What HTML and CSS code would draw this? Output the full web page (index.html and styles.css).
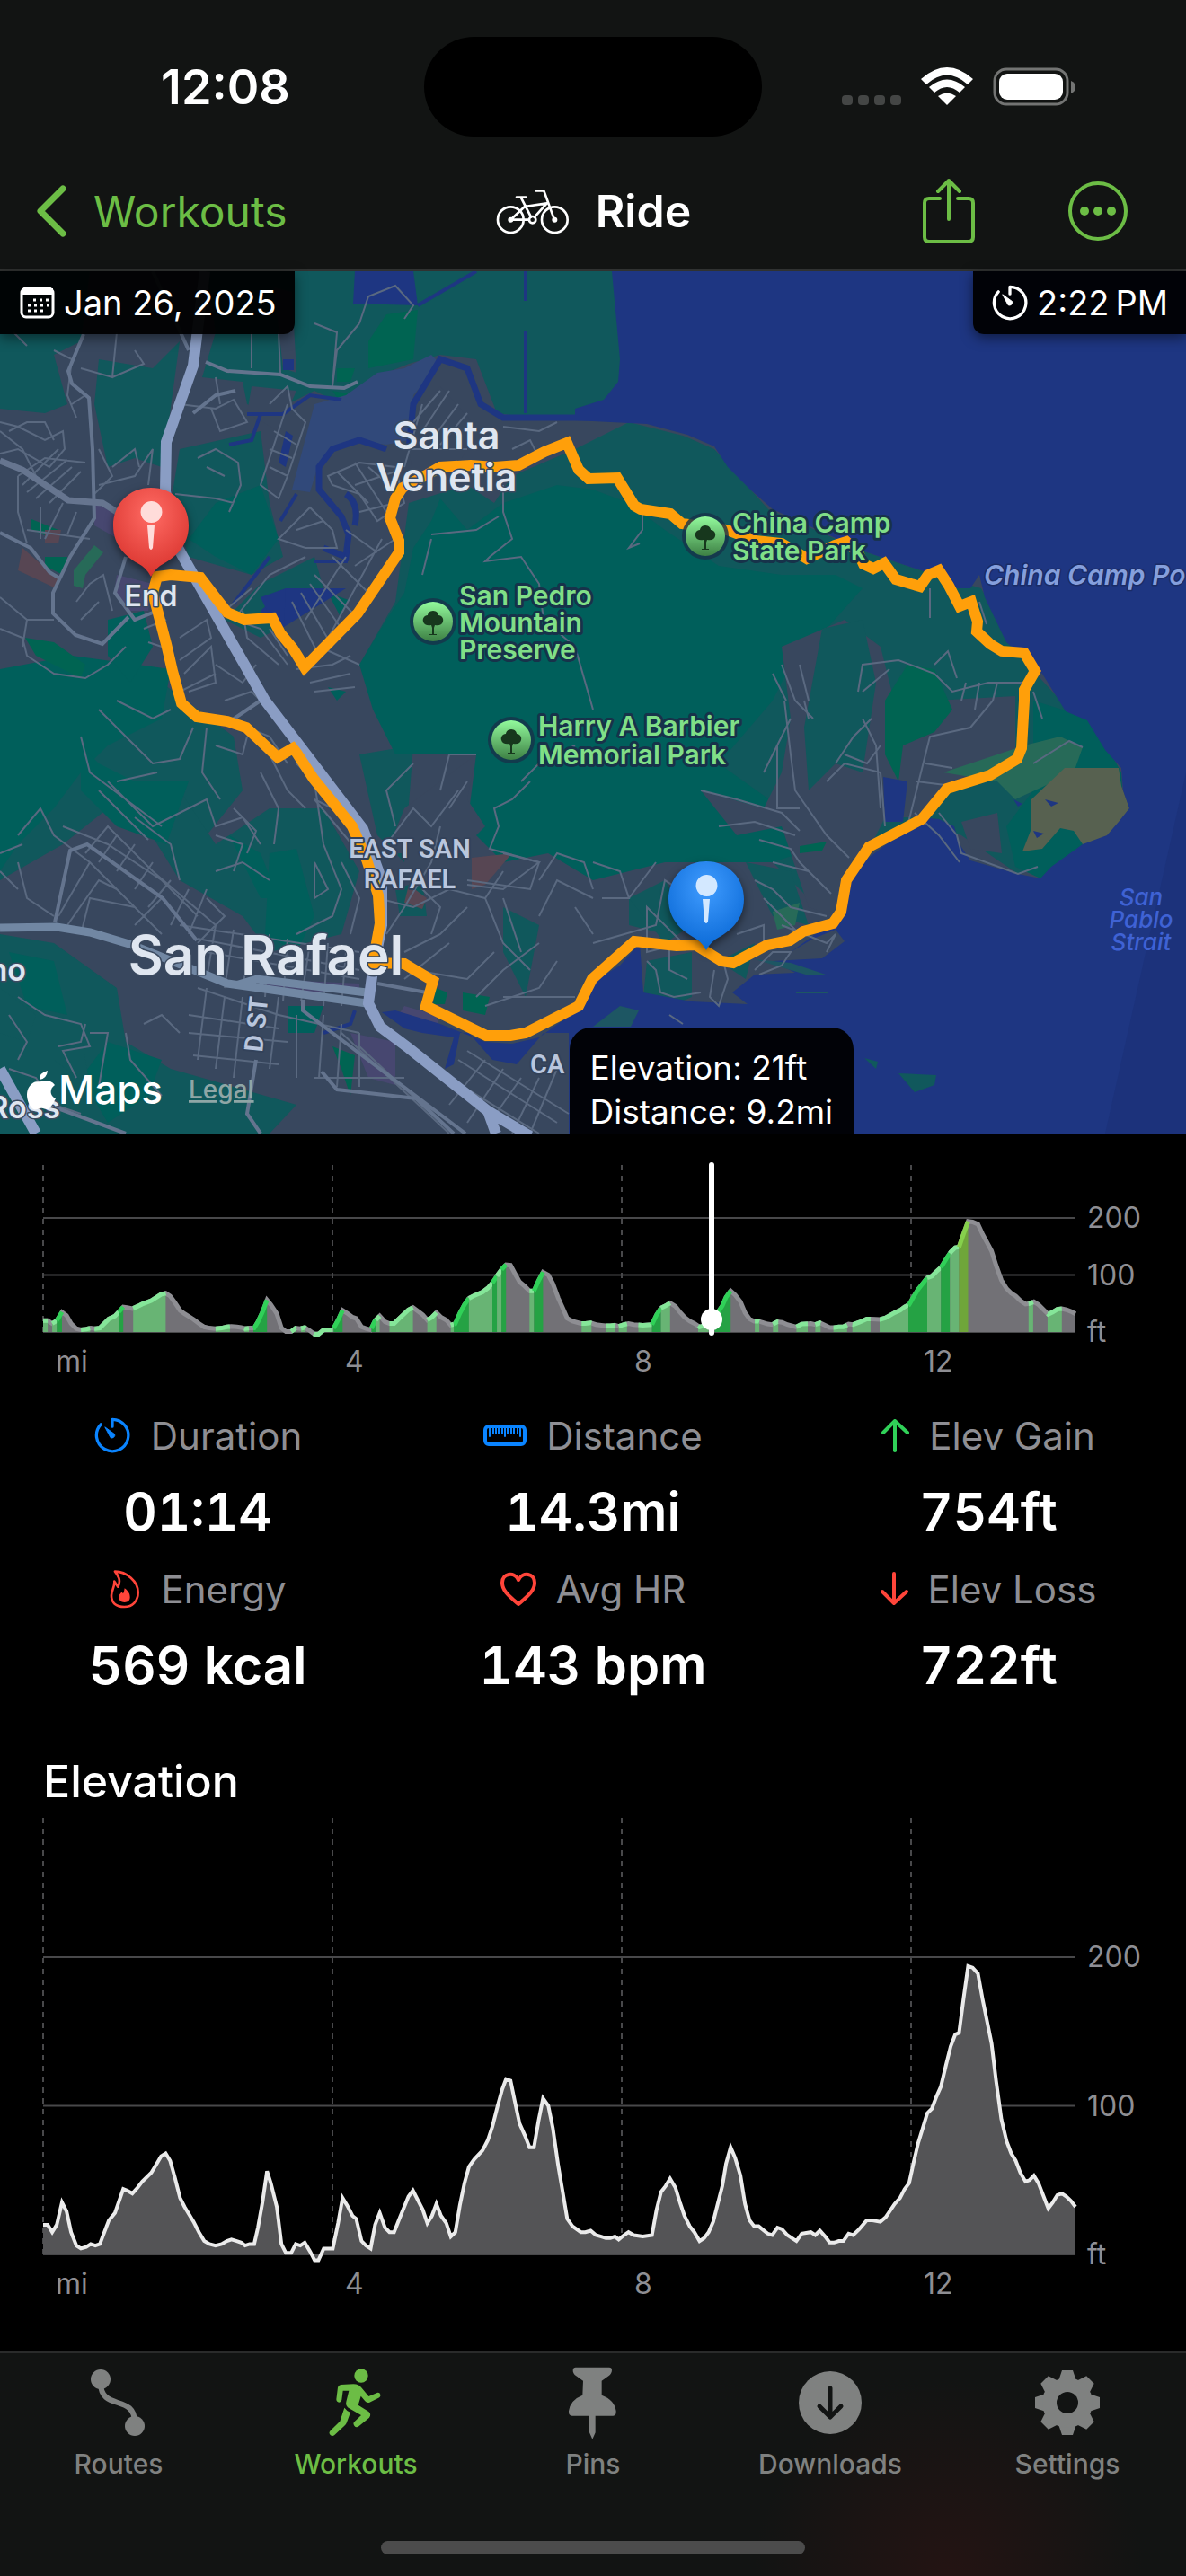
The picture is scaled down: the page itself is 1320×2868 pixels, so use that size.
FILE: index.html
```html
<!DOCTYPE html>
<html lang="en">
<head>
    <meta charset="UTF-8">
    <meta name="viewport" content="width=device-width, initial-scale=1.0">
    <title>Ride</title>
    <link rel="stylesheet" href="styles.css">
</head>
<body>
    <svg class="defs" width="0" height="0" aria-hidden="true">
        <symbol id="timer" viewBox="40 24 128 128">
            <path d="M104 58V34A54 54 0 1 1 65 51" fill="none" stroke="currentColor" stroke-width="10" stroke-linecap="round" stroke-linejoin="round"/>
            <path d="M79 60L112 84A10 10 0 0 1 98 96Z" fill="currentColor" stroke="currentColor" stroke-width="3" stroke-linejoin="round"/>
        </symbol>
        <symbol id="tree" viewBox="0 0 60 60">
            <circle cx="30" cy="30" r="26" fill="#17324a" opacity=".8"/>
            <circle cx="30" cy="30" r="22" fill="url(#park)"/>
            <path d="M30 18c4 0 6 3 6 5 4 0 6 4 5 7-1 4-5 5-9 4l-1 3v7h3v1h-8v-1h3v-7l-1-3c-4 1-8 0-9-4-1-3 1-7 5-7 0-2 2-5 6-5z" fill="#17371d"/>
        </symbol>
        <linearGradient id="park" x1="0" y1="0" x2="0" y2="1">
            <stop offset="0" stop-color="#92fa9c"/>
            <stop offset="1" stop-color="#3d8044"/>
        </linearGradient>
        <radialGradient id="red" cx=".5" cy=".3" r=".7">
            <stop offset="0" stop-color="#ff6b64"/>
            <stop offset="1" stop-color="#d9332d"/>
        </radialGradient>
        <radialGradient id="blue" cx=".5" cy=".3" r=".7">
            <stop offset="0" stop-color="#409cff"/>
            <stop offset="1" stop-color="#0a69d6"/>
        </radialGradient>
    </svg>

    <header class="header">
        <div class="status">
            <div class="clock">12:08</div>
            <div class="island"></div>
            <div class="signals">
                <svg width="66" height="43" viewBox="0 0 66 43" fill="#444645">
                    <rect x="0" y="31" width="12" height="11" rx="4"/>
                    <rect x="18" y="31" width="12" height="11" rx="4"/>
                    <rect x="36" y="31" width="12" height="11" rx="4"/>
                    <rect x="54" y="31" width="12" height="11" rx="4"/>
                </svg>
                <svg width="58" height="43" viewBox="0 0 58 43" fill="#fff">
                    <path d="M0 13Q29-13 58 13L52 19Q29-2 6 19Z"/>
                    <path d="M9 22Q29 5 49 22L43 28Q29 16 15 28Z"/>
                    <path d="M19 32Q29 25 39 32L29 42Z"/>
                </svg>
                <svg width="94" height="43" viewBox="0 0 94 43">
                    <rect x="2" y="2" width="81" height="39" rx="13" fill="none" stroke="#737473" stroke-width="3"/>
                    <rect x="7" y="7" width="71" height="29" rx="9" fill="#fff"/>
                    <path d="M87 15q5 2 5 7t-5 7z" fill="#737473"/>
                </svg>
            </div>
        </div>
        <nav class="nav">
            <a class="back" href="#workouts">
                <svg width="34" height="58" viewBox="0 0 34 58" fill="none" stroke="currentColor" stroke-width="7" stroke-linecap="round" stroke-linejoin="round"><path d="M30 4L5 29L30 54"/></svg>
                Workouts
            </a>
            <h1 class="title">
                <svg width="84" height="52" viewBox="40 60 250 156" fill="none" stroke="#fff" stroke-width="8" stroke-linecap="round" stroke-linejoin="round">
                    <circle cx="91" cy="167" r="43"/>
                    <circle cx="238" cy="167" r="43"/>
                    <circle cx="164" cy="167" r="11"/>
                    <path d="M175 70h27L237 167M111 92h31M125 92L159 158M91 167h61M91 167L138 123L212 112L171 158"/>
                    <circle cx="91" cy="167" r="5" fill="#fff"/>
                    <circle cx="238" cy="167" r="5" fill="#fff"/>
                </svg>
                Ride
            </h1>
            <div class="actions">
                <button type="button" aria-label="Share">
                    <svg width="60" height="74" viewBox="0 0 60 74" fill="none" stroke="currentColor" stroke-width="4" stroke-linecap="round" stroke-linejoin="round"><path d="M20 23H8q-5 0-5 5v38q0 5 5 5h44q5 0 5-5V28q0-5-5-5H40M30 46V3M18 15L30 3L42 15"/></svg>
                </button>
                <button type="button" aria-label="More">
                    <svg width="68" height="68" viewBox="0 0 68 68"><circle cx="34" cy="34" r="31" fill="none" stroke="currentColor" stroke-width="4"/><g fill="currentColor"><circle cx="19" cy="34" r="5"/><circle cx="34" cy="34" r="5"/><circle cx="49" cy="34" r="5"/></g></svg>
                </button>
            </div>
        </nav>
    </header>

    <main>
        <section class="map">
            <svg class="map-canvas" viewBox="0 302 1320 960" role="img" aria-label="Ride route around China Camp">
                <rect x="0" y="302" width="1320" height="960" fill="#38475e"/>

                <!-- hills and parks -->
                <g fill="#10585c">
                    <path d="M230 302H690L690 440L660 462L590 465L553 460L530 400L490 395L455 405L430 415L400 440L370 445L350 435L330 445L300 460L275 450L270 425L225 420L240 370Z"/>
                    <path d="M0 302H100L90 380L60 395L75 450L50 460L0 455Z"/>
                    <path d="M110 400L170 410L200 380L185 490L180 520L150 510L120 520L105 450Z"/>
                    <path d="M200 500L290 480L300 560L315 620L280 640L210 620L190 560Z"/>
                    <path d="M250 690L290 650L350 620L360 655L310 700L290 710Z"/>
                    <path d="M455 560L520 540L550 560L570 530L640 500L700 470L760 485L795 500L855 567L930 600L965 615L1040 640L1092 655L1130 725L1185 785L1230 835L1250 890L1200 950L1133 973L1070 930L1020 912L970 945L935 1000L900 1000L860 960L800 940L650 960L590 880L545 850L430 790L400 740L440 670Z"/>
                    <path d="M0 760L100 750L180 760L260 820L270 880L230 930L170 930L120 900L70 940L0 980Z"/>
                    <path d="M150 900L200 880L240 940L300 900L360 900L400 970L380 1040L300 1060L270 1020L200 980Z"/>
                    <path d="M0 1040L60 1050L130 1100L140 1160L190 1190L330 1230L300 1262H0Z"/>
                    <path d="M560 1010L600 1030L585 1110L560 1060ZM400 840L460 830L450 960L420 930Z"/>
                    <path d="M700 1000L750 1010L740 1040L700 1030ZM720 1070L770 1060L770 1110L740 1123L716 1110ZM800 1070L840 1050L830 1090Z"/>
                </g>
                <g fill="#005f5b">
                    <path d="M490 555L520 590L560 560L620 540L660 545L700 560L740 590L800 630L870 640L930 640L960 655L920 700L890 720L860 780L800 850L870 900L890 950L860 960L770 960L740 960L660 980L610 950L560 960L520 920L530 840L440 840L415 790L400 740L430 690L450 660L460 610L480 580Z"/>
                    <path d="M0 745L80 730L190 745L180 800L120 830L90 860L60 900L20 940L0 970Z"/>
                    <path d="M240 560L290 540L310 600L280 640L240 620L210 600Z"/>
                    <path d="M90 830L110 850L150 870L210 870L185 940L130 920L90 880ZM300 950L330 945L350 1020L330 1060L295 1040ZM255 930L290 950L310 1000L290 1000Z"/>
                    <path d="M10 1060L60 1070L75 1130L30 1120ZM120 1160L180 1180L165 1220L120 1250L90 1200ZM320 1120L360 1120L350 1150L320 1150Z"/>
                    <path d="M120 690L160 680L170 720L145 760L120 730ZM365 765L385 770L375 780ZM365 660L388 668L378 685Z"/>
                    <path d="M1150 780L1215 800L1248 860L1250 895L1200 950L1158 978L1130 965L1120 920L1150 880ZM980 780L1090 780L1030 820L990 870L975 830Z"/>
                </g>
                <g fill="#38475e">
                    <path d="M870 720L940 690L980 720L1000 800L1040 780L1130 775L1130 850L1050 880L1020 910L985 910L960 960L930 1020L900 1010L870 920L820 930L780 880L850 900L870 860L880 800Z"/>
                    <path d="M490 870L530 840L520 890L540 920L510 950L430 950L450 900ZM1070 915L1110 905L1115 950L1080 945Z"/>
                    <path d="M280 430L330 435L310 480L275 460ZM450 470L490 430L530 475L510 520L460 530ZM305 320L325 325L330 415L315 410Z"/>
                </g>
                <g fill="#10585c">
                    <path d="M915 700L960 690L975 760L960 860L930 850L900 880L895 810ZM700 1000L740 980L770 1030L740 1050ZM830 960L880 970L900 1030L860 1020Z"/>
                    <path d="M0 1100L40 1130L30 1160L0 1150ZM60 1180L90 1150L100 1210ZM440 990L470 980L475 1020L445 1020Z"/>
                </g>
                <g fill="#006452">
                    <path d="M410 380L430 350L465 345L460 400L410 410ZM375 410L395 410L390 425H375ZM370 435L395 440L380 450Z"/>
                    <path d="M985 780L1010 740L1040 745L1060 790L1040 815L1005 830L1000 870L985 840ZM28 710L60 715L95 740L90 755L40 730ZM35 578L65 590L60 600L35 590ZM50 620L75 620L70 640L50 630Z"/>
                    <path d="M370 1165L395 1175L390 1220L380 1190ZM485 1100L498 1105L495 1118H482ZM515 1105L545 1110L540 1130L515 1125ZM890 942L920 937L915 947L890 950Z"/>
                </g>
                <path d="M1050 860L1140 830L1180 820L1205 832L1195 860L1130 890L1110 870ZM82 635L105 607L115 615L95 640L92 655L82 652ZM860 1015L890 1005L885 1030L865 1035Z" fill="#276a58"/>
                <path d="M1148 890L1185 855L1245 855L1248 875L1257 900L1230 935L1205 940L1195 925L1180 922L1160 945L1138 948L1147 925Z" fill="#576150"/>
                <path d="M105 560L130 572L128 598L105 585ZM130 640L170 650L165 680L140 680L127 660ZM290 1090L400 1095L400 1105L290 1105ZM450 1120L485 1130L490 1145L440 1135ZM390 1150L440 1160L440 1208L410 1200Z" fill="#474770"/>
                <path d="M25 610L65 645L62 655L20 635ZM455 985L475 1000L470 1012L450 1005ZM525 955L570 950L540 985L525 990ZM50 590L68 590L65 605H50Z" fill="#574653"/>

                <!-- water -->
                <path d="M385 440L420 415L450 410L480 395L490 405L460 440L455 490L430 495L390 490L355 515L345 548L325 545L350 450Z" fill="#31497a"/>
                <g fill="#1e3682">
                    <path d="M681 302H1320V1262H633V1150H605L575 1185L548 1180L522 1150L512 1150L505 1185L495 1190L505 1155L470 1150L450 1145L425 1127L440 1125L490 1140L540 1160L570 1162L600 1155L635 1130L665 1090L690 1075L712 1050L716 1105L770 1115L832 1118L815 1105L840 1085L885 1083L860 1070L915 1067L940 1048L930 1035L905 1045L880 1060L935 1020L945 985L960 960L1000 930L1025 910L1045 912L1062 920L1068 940L1080 958L1133 973L1158 978L1170 965L1205 940L1232 930L1245 915L1257 900L1250 880L1248 855L1230 835L1210 802L1186 792L1160 750L1120 715L1096 665L1090 640L1080 655H1065L1040 640L965 615L860 567L835 545L810 520L795 497L765 484L720 472L640 468L640 455L672 445L688 425L690 400Z"/>
                    <path d="M395 302H460L465 340L393 338ZM385 655H318L290 680L304 698H316ZM983 865L1010 870L1005 915H985ZM315 400h12v12h-12zM318 480L326 485L318 520L310 515Z"/>
                    <path d="M290 665L318 655L316 698L305 696ZM1128 890l10 5-5 3zM1163 890l15 4-8 4zM1150 925l12 3-8 5z"/>
                </g>
                <path d="M455 500L460 450L490 400L520 410L535 450L560 465H660M360 610L385 620L388 595L380 575L355 545L355 520L370 500L400 490L430 500M385 550Q400 560 395 585M0 1195L40 1262" fill="none" stroke="#1e3682" stroke-width="7"/>
                <path d="M465 340L530 302M585 302V335M585 368V460M275 461H315L345 440L380 445M290 461L280 490L255 495M330 550L312 580M388 600L385 625L350 625M300 620L260 672M395 1125L390 1140L360 1150" fill="none" stroke="#1e3682" stroke-width="4"/>
                <path d="M962 1178l15 4-2 8zM1000 1195L1042 1197L1040 1208L1018 1216Z" fill="#10585c"/>
                <path d="M1320 860L1230 1262H1320Z" fill="#1a2c70" opacity=".4"/>
                <path d="M690 1120L711 1125L702 1143H660ZM840 1068L880 1072L922 1086H900ZM886 1104h36v2h-36z" fill="#1d5663"/>

                <!-- side streets -->
                <g class="streets">
                    <path d="M15 370L30 385M60 390L80 400L75 440L85 465M130 370L125 420L90 410M125 420L160 405L150 390M95 440L80 450M0 470L20 475L50 490L70 480L72 500L55 520L20 500L0 505M20 530L50 510L95 515M25 540L65 500M30 548L75 512M40 555L80 520M55 560L90 525M20 530L20 570L30 605M45 565L45 600M30 590L100 600M50 600L70 560M75 595L85 570M110 500L125 530L105 550M125 520L150 500L155 520M110 540L150 530L170 500L165 540M10 480L30 470L50 470L60 490M0 480L25 500L40 530"/>
                    <path d="M280 370L280 410M310 370L312 415M350 360L375 370L370 430M400 360L375 390L370 430M400 360L410 330L440 318L460 340L450 355M200 450L240 455L260 445L275 470L245 480L235 455M240 420L245 450M300 450L320 430L325 455L340 470L320 530L310 555L290 540L310 480L320 450M300 500L325 510M305 480L330 495M300 520L320 530M220 510L240 500L265 515L268 540L255 570M195 550L240 555L260 560M230 520L250 530"/>
                    <path d="M365 530L400 515L440 520L450 560L420 580L400 550L370 540ZM375 525L410 560M395 515L430 570M410 520L445 550M395 540L440 525M400 570L440 560M385 590L420 615M395 630L440 600M370 620L410 660M350 640L400 690M345 650L380 700M335 660L370 720M325 670L355 730M340 690L385 620M360 720L425 600M320 590L345 565L370 590L375 610L340 610L310 600ZM330 590L360 580M250 680L280 655M260 690L300 640L340 620M270 680L275 710L310 740M300 700L320 730"/>
                    <path d="M460 470L490 435M470 480L500 435M480 490L510 450M490 495L520 460M450 520L470 450M455 500L520 500M560 475L600 480L620 470M570 500L590 490L600 510L575 515M560 540L560 570L570 600L545 620L540 625L580 620L600 650L605 690L640 720L660 790M480 595L530 590L555 575M470 640L480 600"/>
                    <path d="M60 690L30 690L0 665M0 700L25 710L30 730L60 750L95 755L120 740L140 720M30 690L25 720M85 670L100 650L115 640L125 680M90 690L110 670M160 700L185 690M165 715L180 720M200 710L230 690L235 710L200 735M205 750L235 720L240 760L210 770M200 770L240 750M240 740L270 760L285 740M250 780L280 770L300 790M260 690L290 700L320 740M330 745L370 740L390 730M345 760L390 750M350 770L395 765M355 720L400 740"/>
                    <path d="M110 790L140 820L170 850L200 845L215 810M130 780L170 800L190 790M230 810L225 860L245 890M240 830L270 840L275 820M250 800L300 820L320 850M90 820L100 860L180 920M110 880L165 935M120 870L170 920L190 910M130 870L175 860M190 910L230 890L240 920L270 910L290 940M240 930L270 940L260 970M150 910L190 940L200 980M260 900L285 925L275 950M290 860L310 900L305 940M300 840L320 880L340 900M330 850L360 880L370 900L350 890L400 950M350 870L360 940L380 990L370 1020L330 1040"/>
                    <path d="M20 930L45 900L60 930L100 960L140 1000L180 1040M20 960L30 1000L60 1020M0 950L25 940M0 970L20 990M70 920L120 940L180 980L220 1020M95 950L120 920L170 970L240 1030M130 930L110 960M150 940L130 970M170 960L150 990M190 980L165 1010M210 990L190 1030M230 990L210 1040M65 1020L100 960M75 1030L110 980L130 990M90 1040L100 1000L150 1010M180 1000L150 1030M240 970L270 960L300 980M230 1000L250 1020L220 1050M350 960L365 990L350 1000ZM380 960L400 1000L390 1040"/>
                    <path d="M200 1030L400 1060M220 1045L400 1080M230 1060L400 1090M240 1030L230 1090M260 1035L250 1100M280 1040L270 1100M300 1040L295 1110M320 1045L315 1115M345 1050L335 1115M365 1050L360 1120M385 1060L380 1120M220 1100L310 1130L400 1150M210 1130L310 1145M210 1150L320 1160M215 1175L310 1185M230 1100L220 1180M250 1110L240 1190M270 1110L260 1200M310 1110L300 1190M330 1130L330 1200M360 1130L355 1200M380 1140L375 1210M400 1150L400 1210M350 1200L450 1200M400 1165L480 1240M380 1150L500 1262"/>
                    <path d="M20 1110L50 1130L90 1140L100 1165L70 1170L85 1200M10 1130L30 1160L20 1180M65 1165L90 1160L95 1140M100 1150L120 1150L115 1180L110 1210M140 1150L145 1180L180 1220M160 1140L180 1130L200 1150M10 1190L40 1200L60 1230L90 1240"/>
                    <path d="M420 1000L460 1010L500 990L540 1000L560 970M430 1040L450 1010L480 960L490 920M450 1060L490 1040L520 1010M450 1090L500 1050M460 1080L520 1090L550 1060M470 990L490 1010L480 1040M430 940L460 900L480 920L510 880M440 920L430 880L460 850M490 880L500 840L530 840M500 900L520 870M520 980L590 990L600 960L560 950M540 1000L560 1050L590 1080M560 1000L580 1060M600 1020L620 980L660 1000M640 1010L660 1040M600 980L620 950L650 960L660 990M530 1110L560 1080L600 1050M540 1120L600 1100L620 1070M560 1110L640 1110"/>
                    <path d="M590 870L570 890L550 900L555 920L545 945L600 960L560 990L520 985M500 1200L600 1262M510 1180L620 1250M520 1170L633 1240M540 1180L500 1230M560 1190L520 1250M580 1200L545 1250M600 1200L570 1262M620 1190L590 1262M455 1170L530 1220"/>
                    <path d="M660 1050L730 1030L740 980L770 1000L780 1040M700 1000L730 960M720 1010L760 1050L720 1060ZM720 1070L730 1080L735 1105L750 1110L780 1105M745 1055L745 1080L765 1090M795 1080L790 1110L800 1120L810 1090L805 1070M840 1080L860 1060L880 1060L870 1075L845 1085M820 1040L850 1030L850 1050M840 980L860 990L880 1010L920 1020M850 1000L890 1040M870 1030L920 1050L930 1040L920 1060M845 935L880 945L890 960L925 995M860 960L900 970M660 960L690 970L700 1000L670 1000"/>
                    <path d="M873 780L880 840L885 880L920 930L945 955M865 830L865 900L890 900M850 860L870 820L880 800M870 740L885 780L905 800M780 880L820 890L870 905L890 925M800 920L840 915L885 930M920 870L940 850L980 860L985 920M930 850L950 820L970 800M940 840L965 850L980 830M960 800L975 830L980 900M900 800L895 780M1010 920L1020 880L1035 820L1080 810L1105 780L1110 760M1020 870L1060 875M1030 850L1060 855M1018 905L1045 930L1068 960"/>
                    <path d="M955 770L960 740L1000 735L1040 750L1060 770L1100 760L1140 760M960 770L990 745M1040 740L1055 725L1065 755M1070 780L1075 760M1085 790L1090 760M1150 770L1160 800M1150 850L1190 825L1205 832M715 570L715 590L700 610L712 605M1035 655V688M1090 670L1098 695M890 740L900 780M860 750L875 780M1045 905L1065 930L1070 950L1133 973L1155 965M640 830L600 850L580 870M745 1130L760 1140"/>
                </g>

                <!-- main roads -->
                <g class="roads">
                    <path d="M93 372L76 413L80 427L99 443L103 500L105 577L78 620L59 660V683L84 707L114 717L143 687M0 593L34 610L55 637L65 643M229 403L253 413L312 417L345 430L383 432L398 425M215 460L240 440L262 435M140 620L128 660L150 690L175 680M61 1027L78 947L97 940L181 1000L219 1047M358 1193L375 1213L463 1223L505 1262M285 1180L275 1240L290 1262M337 1113V1125L518 1262M40 1225L140 1262M420 1095L475 1105M170 302L210 390M253 805L290 780"/>
                </g>
                <path d="M0 513L25 523L76 557L114 560L130 570" fill="none" stroke="#66758f" stroke-width="7"/>
                <path d="M0 1033L63 1032L100 1038L147 1052L253 1095L408 1117M262 1097L286 1090L408 1105" fill="none" stroke="#7187a3" stroke-width="9"/>
                <path class="freeway" d="M228 302L215 407L185 492L184 547L198 610L295 780L404 923L425 980V1030L415 1080L410 1117L423 1143L455 1167L543 1237L590 1265M543 1237L552 1262M0 1190L40 1262"/>

                <!-- ride -->
                <path class="ride" d="M175 642L190 640L223 643L242 668L253 682L272 690L303 688L312 705L326 722L339 743L398 683L444 615V602L434 577L440 555L448 543L476 528L490 520L524 518L551 520L577 518L606 503L631 493L644 523L655 533L687 532L706 563L713 567L746 572L759 583L809 590L841 602L870 605L898 622L929 607L942 603L955 615L961 628L972 633L984 627L997 645L1024 653L1033 640L1045 635L1056 652L1068 675L1081 670L1085 683L1088 692L1087 703L1102 717L1115 725L1140 727L1152 747L1140 768V780L1137 833L1132 845L1102 863L1054 878L1026 912L967 943L942 980L936 1015L927 1028L894 1037L879 1047L854 1052L816 1072L803 1070L774 1052L753 1053L706 1048L659 1090L644 1120L585 1150L568 1153H541L474 1120L482 1092L450 1073L415 1072L423 1028L421 997L408 957L392 920L349 867L330 838L326 833L309 843L274 810L253 803L219 798L202 783L192 747L185 717L170 660Z"/>

                <!-- labels -->
                <g class="town">
                    <text x="497" y="500" font-size="43" text-anchor="middle">Santa</text>
                    <text x="497" y="547" font-size="43" text-anchor="middle">Venetia</text>
                    <text x="296" y="1085" font-size="60" text-anchor="middle">San Rafael</text>
                    <text x="29" y="1092" font-size="34" text-anchor="end">mo</text>
                    <text x="67" y="1245" font-size="34" text-anchor="end">Ross</text>
                    <text x="168" y="675" font-size="32" text-anchor="middle">End</text>
                </g>
                <g class="district">
                    <text x="456" y="955" text-anchor="middle">EAST SAN</text>
                    <text x="456" y="989" text-anchor="middle">RAFAEL</text>
                    <text x="590" y="1195">CA</text>
                    <text x="292" y="1172" transform="rotate(-84 292 1172)">D ST</text>
                </g>
                <g class="park">
                    <use href="#tree" x="452" y="662" width="60" height="60"/>
                    <text x="511" y="674">San Pedro</text>
                    <text x="511" y="704">Mountain</text>
                    <text x="511" y="734">Preserve</text>
                    <use href="#tree" x="755" y="567" width="60" height="60"/>
                    <text x="815" y="593">China Camp</text>
                    <text x="815" y="624">State Park</text>
                    <use href="#tree" x="539" y="794" width="60" height="60"/>
                    <text x="599" y="819">Harry A Barbier</text>
                    <text x="599" y="851">Memorial Park</text>
                </g>
                <text class="point" x="1095" y="651">China Camp Po</text>
                <g class="strait">
                    <text x="1270" y="1008">San</text>
                    <text x="1270" y="1033">Pablo</text>
                    <text x="1270" y="1058">Strait</text>
                </g>

                <!-- start and end pins -->
                <g class="pin">
                    <path d="M168 543C193 543 210 562 210 585C210 608 195 620 183 627Q173 632 168 642Q163 632 153 627C141 620 126 608 126 585C126 562 143 543 168 543Z" fill="url(#red)"/>
                    <path d="M164 585h8l-2 25q-2 4-4 0zM168 558a12 12 0 1 0 1 0z" fill="#ffdcda"/>
                    <path d="M786 959C811 959 828 978 828 1001C828 1024 813 1036 801 1043Q791 1048 786 1058Q781 1048 771 1043C759 1036 744 1024 744 1001C744 978 761 959 786 959Z" fill="url(#blue)"/>
                    <path d="M782 1001h8l-2 25q-2 4-4 0zM786 974a12 12 0 1 0 1 0z" fill="#d3e8ff"/>
                </g>

                <path d="M53 1192q-1 9-9 10q0-8 9-10zM46 1204c4 0 7-2 10 0q3 1 5 4c-6 4-6 12 1 15q-3 7-7 11c-4 3-6-1-10 0-5 1-7 3-10-1-5-6-8-19 0-26 4-4 8-2 11-3z" fill="#fff"/>
                <text class="maps" x="65" y="1229">Maps</text>
                <a href="#legal"><text class="legal" x="210" y="1223">Legal</text></a>
            </svg>
            <div class="badge date">
                <svg width="40" height="36" viewBox="0 0 40 36">
                    <rect x="2" y="2" width="35" height="32" rx="5" fill="none" stroke="#fff" stroke-width="3"/>
                    <path d="M2 2h35v7H2z" fill="#fff"/>
                    <path d="M15 15h17M9 21h23M9 27h17" stroke="#fff" stroke-width="3" stroke-dasharray="3 4"/>
                </svg>
                Jan 26, 2025
            </div>
            <div class="badge time">
                <svg width="42" height="42"><use href="#timer"/></svg>
                2:22&#8201;PM
            </div>
            <div class="callout">
                <div>Elevation: 21ft</div>
                <div>Distance: 9.2mi</div>
            </div>
        </section>

        <svg class="chart" id="gradeChart" viewBox="0 0 1320 294" role="img" aria-label="Elevation by grade"></svg>

        <dl class="stats">
            <div>
                <dt><svg class="c-blue" width="42" height="42"><use href="#timer"/></svg>Duration</dt>
                <dd>01:14</dd>
            </div>
            <div>
                <dt><svg class="c-blue" width="48" height="24" viewBox="0 0 48 24" fill="none" stroke="currentColor"><rect x="2" y="2" width="44" height="20" rx="4" stroke-width="4"/><path d="M7 3V13M24 3V13M41 3V13M11 3v7M14 3v7M17 3v7M21 3v7M27 3v7M31 3v7M34 3v7M38 3v7" stroke-width="2"/></svg>Distance</dt>
                <dd>14.3mi</dd>
            </div>
            <div>
                <dt><svg class="c-green" width="31" height="38" viewBox="0 0 31 38"><path d="M15 36V3M2 16L15 3L29 16"/></svg>Elev Gain</dt>
                <dd>754ft</dd>
            </div>
            <div>
                <dt><svg class="c-red" width="36" height="44" viewBox="100 533 108 132"><path d="M121 541C160 541 198 574 198 610C198 640 180 659 152 659C124 659 109 645 109 621C109 604 120 594 119 574L131 592C142 570 132 555 121 541Z" fill="none" stroke="currentColor" stroke-width="8" stroke-linejoin="round"/><path d="M153 597C168 608 171 617 171 627C171 638 164 644 153 644C141 644 134 637 134 627C134 617 140 616 143 609L148 615Q152 608 153 597Z" fill="currentColor"/></svg>Energy</dt>
                <dd>569 kcal</dd>
            </div>
            <div>
                <dt><svg class="c-red" width="40" height="38" viewBox="0 0 40 38"><path d="M20 36C11 28 2 22 2 12C2 2 15-1 20 9C25-1 38 2 38 12C38 22 29 28 20 36Z"/></svg>Avg HR</dt>
                <dd>143 bpm</dd>
            </div>
            <div>
                <dt><svg class="c-red" width="31" height="38" viewBox="0 0 31 38"><path d="M15 2V35M2 22L15 35L29 22"/></svg>Elev Loss</dt>
                <dd>722ft</dd>
            </div>
        </dl>

        <h2 class="section-title">Elevation</h2>
        <svg class="chart" id="elevationChart" viewBox="0 0 1320 596" role="img" aria-label="Elevation profile"></svg>
    </main>

    <footer class="tabbar">
        <nav class="tabs">
            <a href="#routes">
                <svg viewBox="0 0 84 84"><circle cx="22" cy="16" r="11"/><circle cx="60" cy="68" r="11"/><path d="M22 20C22 52 60 32 60 64" fill="none" stroke="currentColor" stroke-width="6"/></svg>
                Routes
            </a>
            <a class="active" href="#workouts">
                <svg viewBox="12 40 252 252">
                    <circle cx="156" cy="76" r="23"/>
                    <path d="M88 106L130 104Q148 104 158 117L181 145L209 133Q218 131 220 139Q222 146 214 150L184 165Q175 168 169 161L155 144L146 174L181 196Q191 204 183 216L148 245Q139 251 133 243Q127 235 134 229L156 208L113 183Q103 175 106 163L115 126H95L91 157Q89 165 82 165Q73 164 73 155L78 115Q80 107 88 106Z"/>
                    <path d="M100 183Q106 192 120 199L107 234Q105 239 100 243L67 274Q60 280 53 274Q46 267 53 260L85 228Z"/>
                </svg>
                Workouts
            </a>
            <a href="#pins">
                <svg viewBox="804 40 252 252"><path d="M872 48H984Q993 48 993 57Q993 68 982 77L959 93V141Q1002 157 1007 194Q1008 210 997 210H938V266L928 288L918 266V210H860Q848 210 849 194Q854 157 895 141L897 93L874 77Q862 68 863 57Q864 48 872 48Z"/></svg>
                Pins
            </a>
            <a href="#downloads">
                <svg viewBox="0 0 84 84"><circle cx="42" cy="42" r="35"/><path d="M42 26V57M30 46L42 58L54 46" fill="none" stroke="#121413" stroke-width="5" stroke-linecap="round" stroke-linejoin="round"/></svg>
                Downloads
            </a>
            <a href="#settings">
                <svg viewBox="-42 -42 84 84">
                    <path d="M-10-24L-6-36H6L10-24V24L6 36H-6L-10 24Z"/>
                    <path d="M-10-24L-6-36H6L10-24V24L6 36H-6L-10 24Z" transform="rotate(45)"/>
                    <path d="M-10-24L-6-36H6L10-24V24L6 36H-6L-10 24Z" transform="rotate(90)"/>
                    <path d="M-10-24L-6-36H6L10-24V24L6 36H-6L-10 24Z" transform="rotate(135)"/>
                    <circle r="28"/>
                    <circle r="12" fill="#121413"/>
                </svg>
                Settings
            </a>
        </nav>
        <div class="home"></div>
    </footer>

    <script src="charts.js"></script>
</body>
</html>
```
FILE: styles.css
```css
* {
    box-sizing: border-box;
}

body {
    margin: 0;
    min-height: 100vh;
    display: flex;
    flex-direction: column;
    background-color: #000;
    color: #fff;
    font-family: Inter, "Liberation Sans", sans-serif;
}

svg {
    display: block;
    flex: none;
}

.defs {
    position: absolute;
}

a {
    color: inherit;
    text-decoration: none;
}

/* header */
.header {
    background-color: #121413;
    border-bottom: 2px solid #303231;
}

.status {
    display: grid;
    grid-template-columns: 1fr 376px 1fr;
    align-items: center;
    height: 170px;
    padding-top: 23px;
}

.clock {
    padding-left: 30px;
    text-align: center;
    font-size: 54px;
    font-weight: 600;
}

.island {
    height: 111px;
    border-radius: 56px;
    background-color: #000;
}

.signals {
    display: flex;
    justify-content: center;
    gap: 22px;
    padding-right: 32px;
}

.nav {
    display: grid;
    grid-template-columns: 1fr auto 1fr;
    align-items: center;
    height: 130px;
    padding: 0 40px;
}

.back {
    display: flex;
    align-items: center;
    gap: 30px;
    color: #6cbd45;
    font-size: 48px;
}

.title {
    display: flex;
    align-items: center;
    gap: 28px;
    margin: 0;
    font-size: 50px;
    font-weight: 600;
}

.actions {
    display: flex;
    justify-content: flex-end;
    align-items: center;
    gap: 102px;
    padding-right: 24px;
}

.actions button {
    padding: 0;
    border: 0;
    background: none;
    color: #6cbd45;
}

/* map */
.map {
    position: relative;
}

.map-canvas {
    width: 100%;
    height: auto;
}

.streets {
    fill: none;
    stroke: #5a6980;
    stroke-width: 2;
}

.roads {
    fill: none;
    stroke: #64748e;
    stroke-width: 4;
}

.freeway {
    fill: none;
    stroke: #8a9dc4;
    stroke-width: 12;
}

.ride {
    fill: none;
    stroke: #ff9f0a;
    stroke-width: 12;
}

.map-canvas text {
    font-weight: 600;
    paint-order: stroke;
    stroke-linejoin: round;
}

.town text {
    fill: #dfe6f0;
    stroke: #3b4a60;
    stroke-width: 3;
}

.district text {
    fill: #b9c6dd;
    stroke: #33425a;
    stroke-width: 4;
    font-family: Roboto, sans-serif;
    font-size: 29px;
}

.park text {
    fill: #80df87;
    stroke: #17324a;
    stroke-width: 6;
    font-size: 30px;
}

.map-canvas .point {
    fill: #859fdc;
    stroke: #1a2c66;
    stroke-width: 3;
    font-size: 30px;
    font-style: italic;
}

.strait text {
    fill: #3f62d4;
    font-size: 26px;
    font-style: italic;
    font-weight: 500;
    text-anchor: middle;
}

.pin {
    filter: drop-shadow(0 4px 5px rgba(0, 0, 0, 0.5));
}

.map-canvas .maps {
    fill: #fff;
    font-size: 44px;
    font-weight: 500;
}

.map-canvas .legal {
    fill: #8fa6a6;
    font-size: 28px;
    font-weight: 500;
    text-decoration: underline;
}

.badge {
    position: absolute;
    top: 0;
    display: flex;
    align-items: center;
    gap: 9px;
    height: 70px;
    background-color: rgba(0, 0, 0, 0.95);
    box-shadow: 0 4px 14px rgba(0, 0, 0, 0.5);
    font-size: 38px;
}

.date {
    left: 0;
    padding: 0 20px 0 22px;
    border-radius: 0 0 12px 0;
}

.time {
    right: 0;
    padding: 0 20px;
    border-radius: 0 0 0 12px;
}

.callout {
    position: absolute;
    left: 48%;
    bottom: 0;
    padding: 20px 23px 0;
    border-radius: 24px 24px 0 0;
    background-color: rgba(0, 0, 0, 0.95);
    font-size: 37px;
    line-height: 49px;
}

/* charts */
.chart {
    width: 100%;
    height: auto;
}

.grid {
    stroke: #48484a;
    stroke-width: 2;
}

.tick {
    stroke: #48484a;
    stroke-width: 2;
    stroke-dasharray: 6 6;
}

.axis {
    fill: #8e8e93;
    font-size: 32px;
}

/* stats */
.stats {
    display: grid;
    grid-template-columns: repeat(3, 1fr);
    margin: 0;
}

.stats dt {
    display: flex;
    align-items: center;
    justify-content: center;
    gap: 22px;
    height: 84px;
    color: #8e8e93;
    font-size: 42px;
}

.stats dd {
    height: 87px;
    margin: 0;
    line-height: 87px;
    text-align: center;
    font-size: 58px;
    font-weight: 600;
    font-variant-numeric: tabular-nums;
}

.stats path {
    stroke-linecap: round;
    stroke-linejoin: round;
}

.stats svg[viewBox="0 0 31 38"],
.stats svg[viewBox="0 0 40 38"] {
    fill: none;
    stroke: currentColor;
    stroke-width: 4;
}

.c-blue {
    color: #0a84ff;
}

.c-green {
    color: #30d158;
}

.c-red {
    color: #ff453a;
}

.section-title {
    margin: 50px 0 0;
    padding-left: 48px;
    line-height: 70px;
    font-size: 50px;
    font-weight: 500;
}

/* tab bar */
.tabbar {
    margin-top: auto;
    padding-bottom: 24px;
    border-top: 2px solid #2a2b2b;
    background: radial-gradient(circle at 80% 100%, #241413, transparent 20%) #121413;
}

.tabs {
    display: grid;
    grid-template-columns: repeat(5, 1fr);
}

.tabs a {
    display: flex;
    flex-direction: column;
    align-items: center;
    gap: 8px;
    padding-top: 13px;
    color: #7f8180;
    font-size: 30px;
    font-weight: 500;
    line-height: 36px;
}

.tabs svg {
    width: 84px;
    height: 84px;
    fill: currentColor;
}

.tabs .active {
    color: #6cbd45;
}

.home {
    width: 472px;
    height: 15px;
    margin: 68px auto 0;
    border-radius: 8px;
    background-color: #4c4c4c;
}
```
FILE: charts.js
```js
// [sample, feet]
const profile = [
    [0,20],[6,20],[12,15],[18,20],[25,35],[31,29],[37,15],[44,6],[50,4],[57,5],[63,7],[69,6],[75,7],[87,23],[95,28],
    [106,44],[111,43],[118,41],[125,45],[131,49],[143,55],[149,60],[156,66],[162,68],[168,63],[174,52],[181,38],
    [187,32],[199,22],[206,15],[213,9],[220,7],[228,6],[236,7],[243,9],[249,10],[256,9],[262,8],[267,6],[273,7],
    [279,7],[284,18],[290,35],[296,56],[301,48],[309,32],[315,7],[321,1],[328,1],[334,7],[340,6],[346,8],[353,2],
    [359,-4],[364,-4],[371,4],[383,4],[390,21],[396,38],[402,33],[409,26],[414,24],[421,9],[427,6],[433,4],[439,20],
    [445,28],[452,18],[458,15],[464,15],[471,24],[483,39],[489,43],[496,36],[502,30],[508,21],[514,26],[520,34],
    [526,26],[533,21],[539,12],[545,15],[551,33],[557,48],[563,59],[570,64],[581,70],[588,77],[594,86],[601,100],
    [607,111],[612,118],[618,117],[624,102],[630,88],[637,80],[643,72],[649,72],[655,90],[661,105],[668,100],
    [674,85],[681,60],[687,42],[693,24],[700,19],[711,15],[717,15],[724,16],[731,13],[738,12],[744,11],[750,11],
    [756,12],[761,10],[768,13],[774,15],[781,13],[793,12],[805,13],[811,30],[817,42],[823,46],[829,51],[836,45],
    [842,35],[848,26],[855,19],[861,15],[868,9],[874,11],[880,15],[886,22],[892,34],[898,46],[903,61],[909,72],
    [915,65],[922,53],[928,34],[934,23],[940,19],[946,19],[958,14],[964,13],[971,18],[977,17],[984,13],[996,9],
    [1003,14],[1015,15],[1021,13],[1027,16],[1034,12],[1040,8],[1046,8],[1052,9],[1058,9],[1065,14],[1071,13],
    [1079,17],[1089,23],[1095,23],[1107,22],[1114,25],[1126,34],[1133,38],[1139,44],[1145,48],[1151,62],[1157,75],
    [1163,85],[1169,95],[1175,98],[1181,106],[1187,113],[1194,128],[1200,140],[1206,148],[1211,149],[1217,172],
    [1223,194],[1229,193],[1236,189],[1242,172],[1254,142],[1260,117],[1267,91],[1274,76],[1280,68],[1286,63],
    [1292,55],[1299,49],[1304,50],[1310,53],[1316,48],[1329,31],[1335,35],[1341,40],[1347,41],[1353,39],[1359,36],
    [1365,32]
];

// climbing stretches by grade
const easy = { line: '#85e699', fill: '#68b474' };
const medium = { line: '#30d158', fill: '#25a244' };
const steep = { line: '#86d04c', fill: '#6fa63a' };
const climbs = [
    [0,6,easy],[12,18,easy],[18,25,medium],[50,62,easy],[68,100,easy],[100,106,medium],[119,162,easy],[228,247,easy],
    [266,272,easy],[278,296,medium],[328,335,easy],[341,347,easy],[358,383,easy],[384,396,medium],[434,440,medium],
    [440,445,easy],[458,489,easy],[508,520,easy],[539,543,easy],[543,563,medium],[563,594,easy],[594,600,medium],
    [600,606,easy],[606,612,medium],[643,649,easy],[649,661,medium],[712,725,easy],[744,756,easy],[761,772,easy],
    [787,805,easy],[805,817,medium],[817,829,easy],[866,880,easy],[888,909,medium],[941,947,easy],[965,972,easy],
    [996,1011,easy],[1021,1028,easy],[1045,1063,easy],[1070,1094,easy],[1106,1144,easy],[1144,1169,medium],
    [1169,1187,easy],[1187,1199,medium],[1199,1211,easy],[1211,1223,steep],[1303,1309,easy],[1328,1347,easy]
];

const LEFT = 48;
const RIGHT = 1197;
const SAMPLE_WIDTH = (RIGHT - LEFT) / 1365;
const MILE_WIDTH = 322 / 4;

function heightAt(sample) {
    const i = Math.max(1, profile.findIndex(p => p[0] >= sample));
    const [x0, y0] = profile[i - 1];
    const [x1, y1] = profile[i];
    return y0 + (y1 - y0) * (sample - x0) / (x1 - x0);
}

function slice(from, to) {
    const inside = profile.filter(p => p[0] > from && p[0] < to);
    return [[from, heightAt(from)], ...inside, [to, heightAt(to)]];
}

function area(points, base, scale, colors, width) {
    const xy = points.map(([s, ft]) => [LEFT + s * SAMPLE_WIDTH, base - ft * scale]);
    const line = xy.map(p => p.map(n => n.toFixed(1)).join(',')).join(' ');
    const first = xy[0][0].toFixed(1);
    const last = xy[xy.length - 1][0].toFixed(1);
    return `<polygon points="${first},${base} ${line} ${last},${base}" fill="${colors.fill}"/>
        <polyline points="${line}" fill="none" stroke="${colors.line}" stroke-width="${width}"/>`;
}

function axes(base, scale, top) {
    let out = '';
    [0, 100, 200].forEach(ft => {
        const y = base - ft * scale;
        out += `<line class="grid" x1="${LEFT}" x2="${RIGHT}" y1="${y}" y2="${y}"/>
            <text class="axis" x="1210" y="${y + 11}">${ft || 'ft'}</text>`;
    });
    [0, 4, 8, 12].forEach(mi => {
        const x = LEFT + mi * MILE_WIDTH;
        out += `<line class="tick" x1="${x}" x2="${x}" y1="${top}" y2="${base}"/>
            <text class="axis" x="${x + 14}" y="${base + 44}">${mi || 'mi'}</text>`;
    });
    return out;
}

const flat = { line: '#8e8e93', fill: '#727176' };
let grade = axes(221, 0.635, 35) + area(profile, 221, 0.635, flat, 5);
climbs.forEach(([from, to, colors]) => {
    grade += area(slice(from, to), 221, 0.635, colors, 5);
});
grade += '<path d="M792 35V222" stroke="#fff" stroke-width="6" stroke-linecap="round"/><circle cx="792" cy="207" r="12" fill="#fff"/>';
document.getElementById('gradeChart').innerHTML = grade;

document.getElementById('elevationChart').innerHTML =
    axes(492, 1.655, 6) + area(profile, 492, 1.655, { line: '#ebebeb', fill: '#545456' }, 4);
```
